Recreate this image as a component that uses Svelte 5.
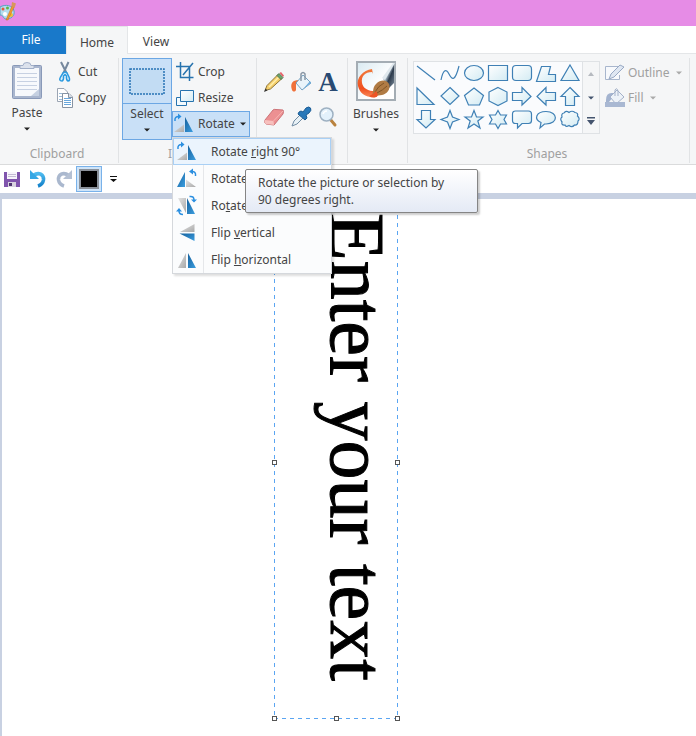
<script>
  const shapes = [
    { name: 'Line', d: 'M1 2L19 16' },
    { name: 'Curve', d: 'M1 16C3 6 6 4 9 10S15 18 19 2', open: true },
    { name: 'Oval', d: 'M0.5 9a9.5 7.5 0 1 0 19 0a9.5 7.5 0 1 0 -19 0z' },
    { name: 'Rectangle', d: 'M0.5 1.5H19.5V16.5H0.5z' },
    { name: 'Rounded rectangle', d: 'M4 1.5H16Q19.5 1.5 19.5 5V13Q19.5 16.5 16 16.5H4Q0.5 16.5 0.5 13V5Q0.5 1.5 4 1.5z' },
    { name: 'Polygon', d: 'M5.5 2.5H14.5L12.5 10.5H19.5V17.5H0.5z' },
    { name: 'Triangle', d: 'M10 1L19 16.5H1z' },
    { name: 'Right triangle', d: 'M1 1V17.5H18z' },
    { name: 'Diamond', d: 'M10 0.5L19 9L10 17.5L1 9z' },
    { name: 'Pentagon', d: 'M10 1L19.5 8.5L15.5 18H4.5L0.5 8.5z' },
    { name: 'Hexagon', d: 'M10 0.5L19 5V14L10 18.5L1 14V5z' },
    { name: 'Right arrow', d: 'M0.5 5.5H10V0.5L19 9.5L10 18V13.5H0.5z' },
    { name: 'Left arrow', d: 'M19.5 5.5H10V0.5L1 9.5L10 18V13.5H19.5z' },
    { name: 'Up arrow', d: 'M10 0.5L19 9.5H14.5V18.5H5.5V9.5H1z' },
    { name: 'Down arrow', d: 'M5.5 0.5H14.5V9.5H19L10 18L1 9.5H5.5z' },
    { name: 'Four-point star', d: 'M10 0.5L12.5 7L19 9.5L12.5 12L10 18.5L7.5 12L1 9.5L7.5 7z' },
    { name: 'Five-point star', d: 'M10 0.5L12.5 7H19L13.8 11L16 18L10 14L4 18L6.2 11L1 7H7.5z' },
    { name: 'Six-point star', d: 'M10 0.5L12.5 5H18.5L16 9.5L18.5 14H12.5L10 18.5L7.5 14H1.5L4 9.5L1.5 5H7.5z' },
    { name: 'Rounded callout', d: 'M3.5 1H16.5Q19.5 1 19.5 4V10.5Q19.5 13.5 16.5 13.5H10L5.5 18V13.5H3.5Q0.5 13.5 0.5 10.5V4Q0.5 1 3.5 1z' },
    { name: 'Oval callout', d: 'M10 1.5C22.500 1.5 22.500 14 10 14L8.5 14L4 18L5 12.5C-2.5 9 0 1.5 10 1.5z' },
    { name: 'Cloud callout', d: 'M4 3Q6 0 9 2.5Q12 0 15 2.5Q18.5 3 17.5 6Q20.5 9 18 11Q18 15.5 14.5 15Q12 18 9 15.5Q6 17.5 5 15Q1 15.5 2 12Q-0.5 9 2 7Q1 3.5 4 3z' }
  ];
  const menu = [
    { icon: 'right', a: 'Rotate ', k: 'r', b: 'ight 90°' },
    { icon: 'left', a: 'Rotate ', k: 'l', b: 'eft 90°' },
    { icon: 'half', a: 'Ro', k: 't', b: 'ate 180°' },
    { icon: 'vert', a: 'Flip ', k: 'v', b: 'ertical' },
    { icon: 'horiz', a: 'Flip ', k: 'h', b: 'orizontal' }
  ];
  const handles = ['ml', 'mr', 'bl', 'bc', 'br'];
</script>

{#snippet caret(cls = '')}
  <svg class="caret {cls}" width="6" height="4" viewBox="0 0 6 4"><path d="M0 0.5H6L3 3.5z" fill="currentColor" /></svg>
{/snippet}

{#snippet turn(kind)}
  <svg width="20" height="20" viewBox="0 0 20 20">
    {#if kind === 'right'}
      <path d="M10 18H0L10 10.500z" fill="url(#greyFill)" />
      <path d="M11 18V3L19 18z" fill="url(#blueFill)" />
      <path d="M1 7C0.500 3.500 2 2.500 5 2.500" fill="none" stroke="#2b8fe0" stroke-width="1.500" />
      <path d="M4 -0.500L7.500 2.500L4 5.500z" fill="#2b8fe0" />
    {:else if kind === 'left'}
      <path d="M8 18V3L0 18z" fill="url(#blueFill)" />
      <path d="M9 18H19L9 10.500z" fill="url(#greyFill)" />
      <path d="M18.500 7C19 3.500 17.500 2.500 15 2.500" fill="none" stroke="#2b8fe0" stroke-width="1.500" />
      <path d="M16 -0.500L12 2.500L16 5.500z" fill="#2b8fe0" />
    {:else if kind === 'half'}
      <path d="M9 2V17L1 2z" fill="url(#greyFill)" />
      <path d="M10 2V18H18z" fill="url(#blueFill)" />
      <path d="M12.500 0.500C16 0 17 1.500 17 4M6 18.500C3 18.500 2 17 2 15" fill="none" stroke="#2b8fe0" stroke-width="1.500" />
      <path d="M14 3.500H20L17 6.500zM-1 15.500H5L2 12z" fill="#2b8fe0" />
    {:else if kind === 'vert'}
      <path d="M17.500 1V9H3z" fill="url(#greyFill)" />
      <path d="M2.500 10.500H17.500V18z" fill="url(#blueFill)" />
    {:else}
      <path d="M9 18V3L1 18z" fill="url(#greyFill)" />
      <path d="M11 18V3L19 18z" fill="url(#blueFill)" />
    {/if}
  </svg>
{/snippet}

<svg class="defs" width="0" height="0" aria-hidden="true">
  <defs>
    <linearGradient id="blueFill" x1="0" y1="0" x2="1" y2="1"><stop offset="0" stop-color="#15609c" /><stop offset="1" stop-color="#3c9ee0" /></linearGradient>
    <linearGradient id="greyFill" x1="0" y1="0" x2="1" y2="1"><stop offset="0" stop-color="#e4e4e4" /><stop offset="1" stop-color="#a9a9a9" /></linearGradient>
    <linearGradient id="shapeFill" x1="0" y1="0" x2="1" y2="1"><stop offset="0" stop-color="#ffffff" /><stop offset="1" stop-color="#d3ebf3" /></linearGradient>
    <linearGradient id="undoFill" x1="0" y1="0" x2="0" y2="1"><stop offset="0" stop-color="#4cb9ee" /><stop offset="1" stop-color="#1583cb" /></linearGradient>
    <linearGradient id="paperFill" x1="0" y1="0" x2="1" y2="1"><stop offset="0" stop-color="#d9eaf1" /><stop offset="0.6" stop-color="#ffffff" /></linearGradient>
    <linearGradient id="steelFill" x1="0" y1="0" x2="1" y2="1"><stop offset="0" stop-color="#eef3f6" /><stop offset="0.45" stop-color="#9fb0bd" /><stop offset="0.6" stop-color="#2c3a4b" /><stop offset="1" stop-color="#7b8c9b" /></linearGradient>
    <linearGradient id="paintFill" x1="0" y1="0" x2="0" y2="1"><stop offset="0" stop-color="#f07a3c" /><stop offset="0.7" stop-color="#f0501f" /><stop offset="1" stop-color="#f98a5c" /></linearGradient>
  </defs>
</svg>

<div class="app">
  <header class="title">
    <svg width="17" height="20" viewBox="0 0 17 20">
      <path d="M0 5C5 2 13 3 14 9C15 14 11 17 6 17C3 17 4 13 0 13z" fill="#b4dcee" stroke="#5b9fc0" />
      <circle cx="3" cy="7" r="1.500" fill="#e35d3b" /><circle cx="7.500" cy="6" r="1.500" fill="#61b547" />
      <circle cx="11" cy="13" r="2" fill="#f0bd35" /><circle cx="5" cy="12" r="2" fill="#fff" />
      <path d="M6 18L12 4L14 5L8 18z" fill="#f39a2b" stroke="#bd6d21" stroke-width=".5" />
      <path d="M11.500 4L12 0L16 1.500L14.500 6z" fill="#d7975a" />
    </svg>
  </header>

  <nav class="tabs">
    <button class="file">File</button>
    <button class="home">Home</button>
    <button class="view">View</button>
  </nav>

  <div class="ribbon">
    <section class="group clipboard">
      <div class="body">
        <button class="big paste">
          <svg width="32" height="38" viewBox="0 0 32 38">
            <rect x="1.500" y="3.500" width="29" height="33" rx="1" fill="#a9b6ce" stroke="#8999b8" />
            <path d="M4 6H28V34H4z" fill="#f7f9fc" />
            <path d="M6 11.500H26M6 15.500H26M6 19.500H26M6 23.500H26M6 27.500H26" stroke="#c7d1e2" />
            <path d="M20 34H28V27z" fill="#c5d0e1" />
            <path d="M9 6.500V3.500H12Q12 0.500 16 0.500T20 3.500H23V6.500z" fill="#dce2ec" stroke="#a1afc8" />
          </svg>
          <span>Paste</span>{@render caret()}
        </button>
        <div class="stack">
          <button>
            <svg width="18" height="20" viewBox="0 0 18 20">
              <path d="M5 0L11 12M12.500 0L7 12" stroke="#76889d" stroke-width="2" fill="none" />
              <path d="M7 11Q9 9 11 11L13 15Q14.500 19 12 19Q10 18 10.500 14L9 12.500L7.500 14Q8 18 6 19Q2.500 19 4.500 15z" fill="#dcedf8" stroke="#2a9ae0" stroke-width="1.500" />
            </svg><span>Cut</span>
          </button>
          <button>
            <svg width="18" height="20" viewBox="0 0 18 20">
              <path d="M1.500 0.500H8L11.500 4V13.500H1.500z" fill="#fff" stroke="#9ba5b3" />
              <path d="M3 5.500H8M3 8.500H8M3 11.500H8" stroke="#9bbbd8" />
              <path d="M6.500 5.500H13L16.500 9V19.500H6.500z" fill="#fff" stroke="#8793a3" />
              <path d="M8 10.500H15M8 12.500H15M8 14.500H15M8 16.500H15" stroke="#69a7dc" />
              <path d="M12.500 5.500V9.500H16.500" fill="#dbe2eb" stroke="#8793a3" />
            </svg><span>Copy</span>
          </button>
        </div>
      </div>
      <h2>Clipboard</h2>
    </section>

    <section class="group image">
      <div class="body">
        <button class="select">
          <span class="pick"><svg width="36" height="27" viewBox="0 0 36 27"><rect x="1" y="1" width="34" height="25" fill="#c2dcf3" stroke="#2773b5" stroke-width="1.500" stroke-dasharray="2 1" /></svg></span>
          <span class="pick-label"><span>Select</span>{@render caret()}</span>
        </button>
        <div class="stack image-stack">
          <button>
            <svg width="18" height="20" viewBox="0 0 18 20"><path d="M4.500 0V15.500H17.500M0 4.500H13.500V19M7 13L17 1" fill="none" stroke="#2773ae" stroke-width="1.500" /></svg><span>Crop</span>
          </button>
          <button>
            <svg width="18" height="20" viewBox="0 0 18 20"><path d="M0.500 9.500H10.500V17.500H0.500z" fill="#f4fafd" stroke="#2773ae" /><path d="M4.500 2.500H17.500V13.500H4.500z" fill="url(#shapeFill)" stroke="#2773ae" /></svg><span>Resize</span>
          </button>
          <div class="rotate-wrap">
            <button class="rotate" aria-haspopup="menu" aria-expanded="true">{@render turn('right')}<span>Rotate</span>{@render caret()}</button>
            <div class="menu" role="menu">
              {#each menu as item, i}
                <button role="menuitem" class:active={i === 0}>{@render turn(item.icon)}<span>{item.a}<u>{item.k}</u>{item.b}</span></button>
              {/each}
            </div>
            <div class="tip" role="tooltip">Rotate the picture or selection by<br />90 degrees right.</div>
          </div>
        </div>
      </div>
      <h2>Image</h2>
    </section>

    <section class="group tools" aria-label="Tools">
      <div class="body tool-grid">
        <button aria-label="Pencil"><svg width="20" height="20" viewBox="0 0 20 20"><path d="M1 18.500L3 13.500L14 2.500L18 6.500L6.500 17z" fill="#f5cf6b" stroke="#8c7439" /><path d="M5 15L15.500 4.500" stroke="#fff0ae" stroke-width="1.500" /><path d="M13 3.500L15 1.500L19 5.500L17 7.500z" fill="#6ba56b" stroke="#4e7451" /><path d="M15.500 1L17 0L20 3.500L19 5z" fill="#e8626a" /><path d="M0 20L1.500 16.500L3.500 18.500z" fill="#333" /></svg></button>
        <button aria-label="Fill with color"><svg width="20" height="20" viewBox="0 0 20 20"><path d="M1 18C-1 12 1 8 8 8L10 10L5 12V18C4 20 2 20 1 18z" fill="#f0713a" /><path d="M5 11L12 3L20 11L11 18z" fill="#e9f4fa" stroke="#76a3c2" /><path d="M13 16L19 9L20 11L11 18z" fill="#70afdc" /><path d="M10 9V2Q12-1 14 2V8" fill="none" stroke="#8b98a6" stroke-width="1.500" /></svg></button>
        <button aria-label="Text" class="letter">A</button>
        <button aria-label="Eraser"><svg width="20" height="20" viewBox="0 0 20 20"><path d="M1 13L9 3Q10 2 12 2.500L19 3Q20 4 19 7L10 18L2 17Q0 16 1 13z" fill="#ec9092" stroke="#cc7378" /><path d="M1 13L9.500 14L10 18L2 17Q0 16 1 13z" fill="#f7c0bd" /><path d="M9.500 14L19 4" stroke="#f6b6b4" /></svg></button>
        <button aria-label="Color picker"><svg width="20" height="20" viewBox="0 0 20 20"><path d="M1 19L3 14L10 7L13 10L6 17z" fill="#e8f1f6" stroke="#728da5" /><path d="M8 5L10 4L12 5L15 1Q18-1 19.500 1T18 6L15 8L16 11L14 13L7 7z" fill="#2878b9" stroke="#1b5c95" /></svg></button>
        <button aria-label="Magnifier"><svg width="20" height="20" viewBox="0 0 20 20"><path d="M12 12L17 18" stroke="#b9823e" stroke-width="3" stroke-linecap="round" /><circle cx="8.500" cy="7.500" r="6.500" fill="#e3f1fb" stroke="#9eb1c2" stroke-width="1.500" /><path d="M5 7Q6 4 9 4" stroke="#fff" stroke-width="1.500" fill="none" /></svg></button>
      </div>
    </section>

    <section class="group brushes">
      <button class="big brush-button">
        <svg width="40" height="40" viewBox="0 0 40 40">
          <rect x="1" y="1" width="38" height="38" fill="url(#paperFill)" stroke="#a4adb4" stroke-width="2" />
          <path d="M16 8C7 9 0 17 2 25C4 33 10 37 21 36L22 30C14 31 7 28 6 22C5 15 9 11 16 11L17 13L16 8z" fill="url(#paintFill)" />
          <path d="M27 18L38 2V22L33 27z" fill="url(#steelFill)" /><path d="M26 17L37 2L39 2L29 19z" fill="#dfe8ed" />
          <path d="M16 34C18 31 16 27 20 23C25 18 31 19 33 23C35 28 31 33 26 34C22 34 20 36 16 34z" fill="#b07b44" />
          <path d="M19 31Q22 25 28 22M21 32Q27 29 31 25" stroke="#815526" fill="none" />
          <path d="M13 35Q18 33 20 30Q24 35 19 36.500Q15 37 13 35z" fill="#ee5527" />
        </svg>
        <span>Brushes</span>{@render caret()}
      </button>
    </section>

    <section class="group shapes">
      <div class="body">
        <div class="gallery">
          <div class="shape-grid">
            {#each shapes as s}
              <button aria-label={s.name}><svg width="20" height="19" viewBox="0 0 20 19"><path d={s.d} fill={s.open ? 'none' : 'url(#shapeFill)'} stroke="#3f80b5" stroke-width="1.200" /></svg></button>
            {/each}
          </div>
          <div class="scroll">
            <button aria-label="Scroll up" disabled><svg width="6" height="4" viewBox="0 0 6 4"><path d="M0 4H6L3 0z" fill="#b6bac0" /></svg></button>
            <button aria-label="Scroll down">{@render caret()}</button>
            <button aria-label="More shapes"><svg width="8" height="8" viewBox="0 0 8 8"><path d="M0 0H8V1.500H0zM0 3H8L4 8z" fill="#44546e" /></svg></button>
          </div>
        </div>
        <div class="stack faded">
          <button disabled>
            <svg width="20" height="18" viewBox="0 0 20 18"><path d="M14 2.500H0.500V15.500H14.500V11" fill="#f7f9fc" stroke="#a8b6cd" /><path d="M4 15L6 10L15 1L19 3L9 13z" fill="#dfe7f2" stroke="#98a9c4" /></svg><span>Outline</span>{@render caret()}
          </button>
          <button disabled>
            <svg width="20" height="20" viewBox="0 0 20 20"><path d="M1 12Q1 4 8 5V9L4 14H1z" fill="#a3b3cf" /><path d="M5 9L12 2L19 9L11 16z" fill="#edf2f8" stroke="#a3b1c9" /><path d="M10 8V2Q12-1 13 3V8" fill="none" stroke="#a3b1c9" /><path d="M0 14H20V19H0z" fill="#a9b8d2" /></svg><span>Fill</span>{@render caret()}
          </button>
        </div>
      </div>
      <h2>Shapes</h2>
    </section>
  </div>

  <div class="quick">
    <button aria-label="Save"><svg width="18" height="18" viewBox="0 0 18 18"><path d="M1 2H17V17H1z" fill="#8055ad" /><path d="M4 2H14V9H4z" fill="#f7f4fb" /><path d="M5 4.500H13M5 6.500H13" stroke="#c4bbd4" /><path d="M5 12H13V17H5z" fill="#d8d3df" /><path d="M6 13H9V16H6z" fill="#4f3570" /></svg></button>
    <button aria-label="Undo"><svg width="18" height="18" viewBox="0 0 18 18"><path d="M4 5.500C10 1.500 15 4.500 14.500 10C14 13 12 15 9 16" fill="none" stroke="url(#undoFill)" stroke-width="3.500" /><path d="M1 0V9H10z" fill="#35a7e4" /></svg></button>
    <button aria-label="Redo" disabled><svg width="18" height="18" viewBox="0 0 18 18"><path d="M14 5.500C8 1.500 3 4.500 3.500 10C4 13 6 15 9 16" fill="none" stroke="#aab8ce" stroke-width="3.500" /><path d="M17 0V9H8z" fill="#b4c0d3" /></svg></button>
    <button class="swatch" aria-label="Color 1, black"><i></i></button>
    <button aria-label="Customize toolbar"><svg width="7" height="6" viewBox="0 0 7 6"><path d="M0 0H7V1H0zM0 3H7L3.500 6z" fill="#111" /></svg></button>
  </div>

  <main>
    <div class="canvas">
      <div class="selection">
        <p>Enter your text</p>
        {#each handles as h}<i class="handle {h}"></i>{/each}
      </div>
    </div>
  </main>
</div>

<style>
  :global(body) { margin: 0; background: #fff; }
  .app { min-height: 100vh; display: flex; flex-direction: column; font: 12px/18px "Noto Sans", "Open Sans", sans-serif; color: #444; overflow: hidden; }
  .defs { position: absolute; }
  svg { display: block; flex: none; overflow: visible; }
  button { font: inherit; color: inherit; background: none; border: 0; padding: 0; margin: 0; display: flex; align-items: center; white-space: nowrap; }
  h2 { font: inherit; color: #a0a0a0; margin: 0; text-align: center; }

  .title { height: 26px; background: #e68ce6; box-sizing: border-box; padding-top: 2px; }
  .tabs { display: flex; height: 28px; background: #fff; box-shadow: inset 0 -1px #e4e6e8; }
  .tabs button { justify-content: center; padding-top: 4px; }
  .tabs .file { width: 66px; background: #1979ca; color: #fff; padding: 0 4px 0 0; }
  .tabs .home { width: 62px; box-sizing: border-box; background: #f5f6f7; border: 1px solid #e4e6e8; border-bottom: 0; }
  .tabs .view { width: 56px; }

  .ribbon { display: flex; height: 111px; box-sizing: border-box; padding: 4px 0 1px; background: #f5f6f7; border-bottom: 1px solid #dadbdc; }
  .group { display: flex; flex-direction: column; justify-content: space-between; box-sizing: border-box; border-right: 1px solid #e1e3e5; }
  .body { display: flex; }
  .clipboard { width: 119px; }
  .clipboard h2 { padding-right: 4px; }
  .image { width: 138px; padding-left: 3px; }
  .image h2 { padding-right: 6px; }
  .tools { width: 91px; }
  .brushes { width: 60px; padding-top: 3px; }
  .shapes { width: 282px; padding: 3px 0 0 5px; }
  .shapes h2 { padding-right: 8px; }

  .big { flex-direction: column; }
  .big span { padding-top: 4px; }
  .big .caret, .pick-label .caret { margin-top: 5px; }
  .caret { color: #222; }
  .paste { width: 54px; padding-top: 4px; }
  .brush-button { width: 56px; }

  .stack { display: flex; flex-direction: column; padding-left: 2px; }
  .clipboard .stack, .image-stack { padding-top: 1px; }
  .stack > button { height: 26px; gap: 4px; }
  .image-stack { padding-left: 0; }
  .image-stack > button { padding-left: 4px; }

  .select { flex-direction: column; align-items: stretch; width: 50px; height: 82px; box-sizing: border-box; border: 1px solid #6ca7e4; background: #c9e0f7; }
  .pick { display: flex; justify-content: center; align-items: center; height: 44px; border-bottom: 1px solid #6ca7e4; }
  .pick-label { display: flex; flex-direction: column; align-items: center; padding-top: 1px; }

  .rotate-wrap { position: relative; }
  .rotate { width: 78px; height: 26px; box-sizing: border-box; border: 1px solid #6ca7e4; background: #c9e0f7; gap: 4px; padding-left: 1px; }
  .rotate .caret { margin-left: 1px; }
  .menu { position: absolute; z-index: 5; top: 26px; left: 0; width: 160px; box-sizing: border-box; border: 1px solid #d5d8dc; background: linear-gradient(90deg, #fbfcfd 30px, #e5e7ea 30px, #e5e7ea 31px, #fbfcfd 31px); box-shadow: 2px 2px 2px #0002; }
  .menu button { width: 100%; height: 27px; box-sizing: border-box; gap: 14px; padding-left: 4px; }
  .menu button.active { background: #ebf4fd; box-shadow: inset 0 0 0 1px #a9d0f5; }
  .tip { position: absolute; z-index: 6; top: 58px; left: 73px; box-sizing: border-box; width: 233px; padding: 4px 12px; border: 1px solid #858585; border-radius: 2px; background: linear-gradient(#fff, #e4eaf5); line-height: 17px; white-space: nowrap; box-shadow: 2px 2px 2px #0003; }

  .tool-grid { display: grid; grid-template-columns: repeat(3, 20px); gap: 15px 7px; padding: 14px 0 0 7px; }
  .letter { justify-content: center; font: bold 27px/20px "Liberation Serif", serif; color: #284a73; }

  .gallery { display: flex; height: 73px; box-sizing: border-box; border: 1px solid #dfe2e5; background: #fafbfd; }
  .shape-grid { display: grid; grid-template-columns: repeat(7, 24px); grid-auto-rows: 23px; }
  .shape-grid button { justify-content: center; }
  .scroll { display: flex; flex-direction: column; width: 16px; background: #f5f6f7; border-left: 1px solid #dfe2e5; }
  .scroll button { flex: 1; justify-content: center; }
  .scroll .caret { color: #44546e; }
  .faded { padding-left: 5px; color: #a0a0a0; }
  .faded > button { gap: 3px; height: 24px; }
  .faded > button + button { margin-top: 1px; }
  .faded .caret { color: #aaa; margin-left: 3px; }

  .quick { display: flex; align-items: center; height: 28px; background: #fff; padding-left: 3px; gap: 8px; }
  .swatch { width: 26px; height: 26px; box-sizing: border-box; border: 1px solid #79b2ea; background: #cfe4f8; justify-content: center; margin-left: -5px; }
  .swatch i { width: 16px; height: 16px; background: #000; border: 2px solid #8a919a; }

  main { flex: 1; display: flex; background: #c8d1e2; padding: 6px 0 0 2px; }
  .canvas { flex: 1; background: #fff; padding: 8px 0 17px 272px; }
  .selection {
    --across: linear-gradient(90deg, #5aa5f2 4px, transparent 4px);
    --down: linear-gradient(#5aa5f2 4px, transparent 4px);
    position: relative; width: 124px; height: 512px; box-sizing: border-box;
    background: var(--down) 0 0 / 1px 8px repeat-y, var(--down) 100% 0 / 1px 8px repeat-y, var(--across) 0 100% / 8px 1px repeat-x;
  }
  .selection p { margin: 0; padding: 6px 0 0 21px; writing-mode: vertical-rl; font: 78px/124px "Liberation Serif", serif; color: #000; -webkit-text-stroke: 1px #000; white-space: nowrap; }
  .handle { position: absolute; width: 3px; height: 3px; border: 1px solid #555; background: #fff; }
  .ml { left: -2px; top: 253px; }
  .mr { right: -2px; top: 253px; }
  .bl { left: -2px; bottom: -2px; }
  .bc { left: 60px; bottom: -2px; }
  .br { right: -2px; bottom: -2px; }
</style>
